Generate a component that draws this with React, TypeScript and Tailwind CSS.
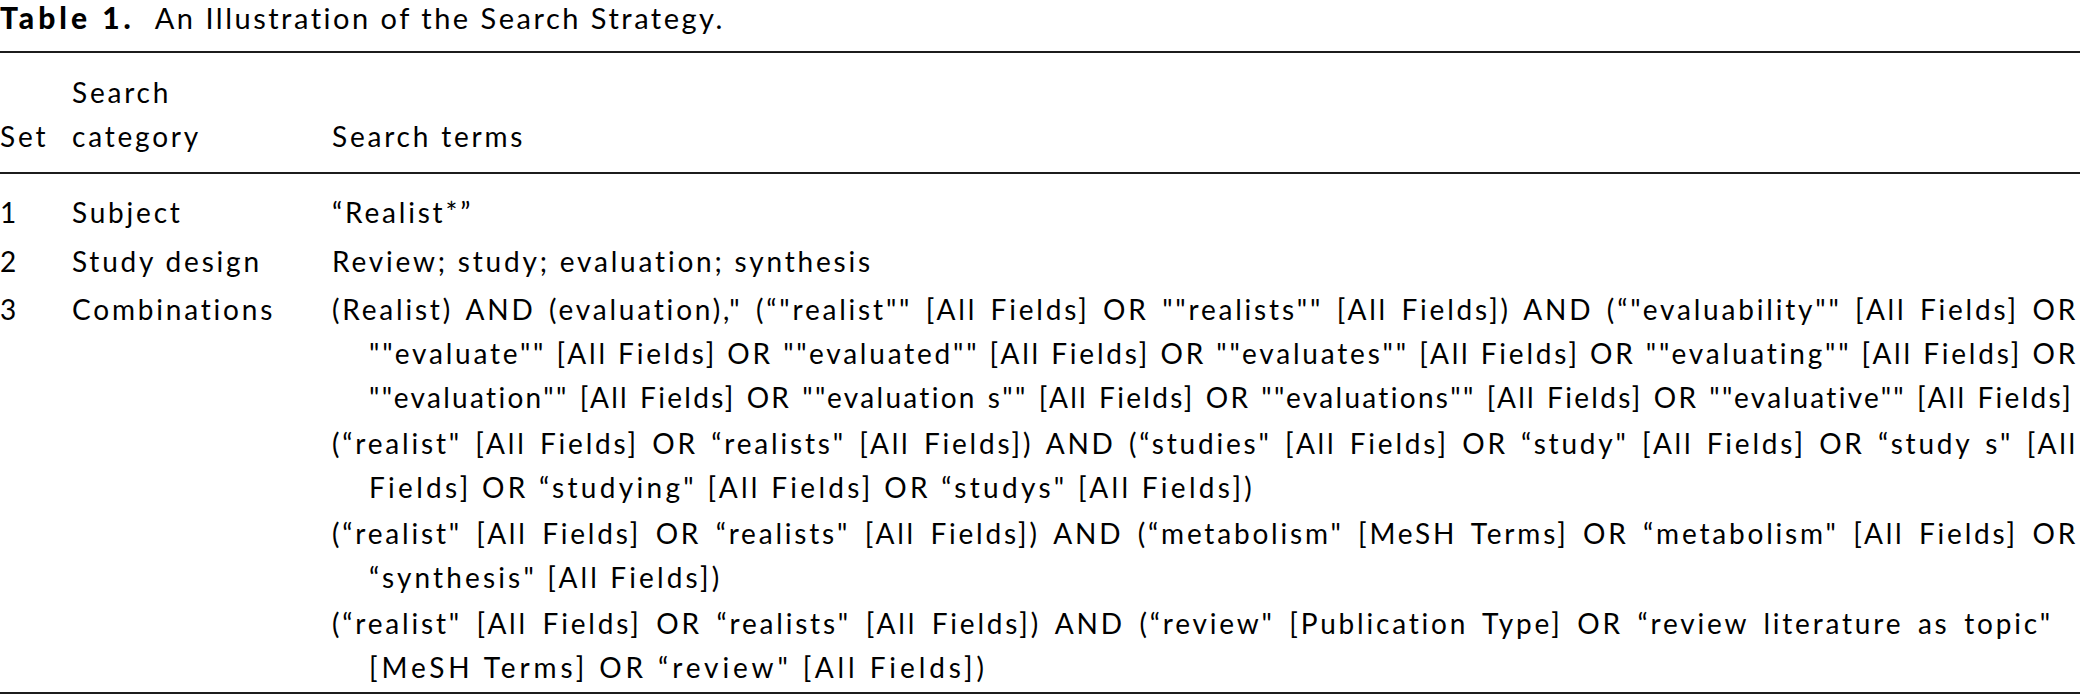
type Line = { text: string; fill?: boolean; cls?: string };

// each visual line of the "Combinations" cell, as set in the reference
const rows3: Line[][] = [
  [
    { text: '(Realist) AND (evaluation)," (“"realist"" [All Fields] OR ""realists"" [All Fields]) AND (“"evaluability"" [All Fields] OR', fill: true },
    { text: '""evaluate"" [All Fields] OR ""evaluated"" [All Fields] OR ""evaluates"" [All Fields] OR ""evaluating"" [All Fields] OR', fill: true },
    { text: '""evaluation"" [All Fields] OR ""evaluation s"" [All Fields] OR ""evaluations"" [All Fields] OR ""evaluative"" [All Fields]', fill: true, cls: "tracking-[2.3px] pr-[5px]" },
  ],
  [
    { text: '(“realist" [All Fields] OR “realists" [All Fields]) AND (“studies" [All Fields] OR “study" [All Fields] OR “study s" [All', fill: true },
    { text: 'Fields] OR “studying" [All Fields] OR “studys" [All Fields])', cls: "tracking-[3.3px]" },
  ],
  [
    { text: '(“realist" [All Fields] OR “realists" [All Fields]) AND (“metabolism" [MeSH Terms] OR “metabolism" [All Fields] OR', fill: true },
    { text: '“synthesis" [All Fields])', cls: "tracking-[3.15px]" },
  ],
  [
    { text: '(“realist" [All Fields] OR “realists" [All Fields]) AND (“review" [Publication Type] OR “review literature as topic"', fill: true, cls: "pr-[25px]" },
    { text: '[MeSH Terms] OR “review" [All Fields])', cls: "tracking-[3.9px]" },
  ],
];

function Para({ lines }: { lines: Line[] }) {
  return (
    <div>
      {lines.map((line, i) => (
        <div
          key={i}
          className={[
            i === 0 ? "" : "pl-[37px]",
            line.fill ? "text-justify [text-align-last:justify]" : "whitespace-nowrap",
            line.cls ?? "",
          ].join(" ")}
        >
          {line.text}
        </div>
      ))}
    </div>
  );
}

export default function App() {
  return (
    <main className="min-h-screen bg-white text-black font-['Lato',sans-serif] overflow-hidden">
      <h1 className="text-[29px] leading-[35px] whitespace-nowrap">
        <span className="font-black text-[30px] tracking-[4px]">Table 1.</span>
        <span className="ml-[20px] tracking-[2.5px]">An Illustration of the Search Strategy.</span>
      </h1>

      <div className="mt-[16px] border-t-2 border-b-2 border-[#1c1c1c] text-[28px] leading-[44px] tracking-[2.8px]">
        <div className="grid grid-cols-[72px_260px_1fr] items-end pt-[17px] pb-[14px] border-b-2 border-[#1c1c1c]">
          <div>Set</div>
          <div>
            Search
            <br />
            category
          </div>
          <div>Search terms</div>
        </div>

        <div className="pt-[16px] pb-[3px]">
          <div className="grid grid-cols-[72px_260px_1fr]">
            <div>1</div>
            <div>Subject</div>
            <div>“Realist*”</div>
          </div>
          <div className="grid grid-cols-[72px_260px_1fr] mt-[5px]">
            <div>2</div>
            <div>Study design</div>
            <div>Review; study; evaluation; synthesis</div>
          </div>
          <div className="grid grid-cols-[72px_260px_1fr] mt-[4px]">
            <div>3</div>
            <div>Combinations</div>
            <div className="flex flex-col gap-[2px] pr-[2px]">
              {rows3.map((lines, i) => (
                <Para key={i} lines={lines} />
              ))}
            </div>
          </div>
        </div>
      </div>
    </main>
  );
}
